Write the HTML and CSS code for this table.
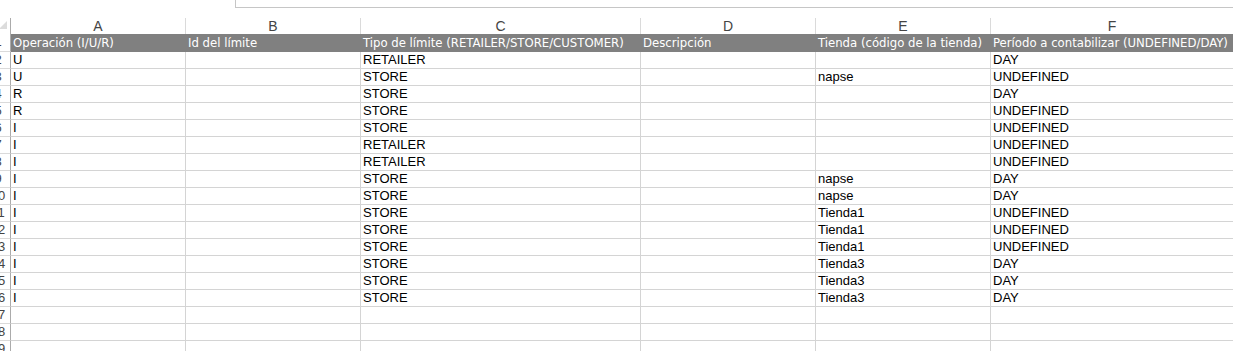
FILE: index.html
```html
<!DOCTYPE html>
<html lang="es">
<head>
<meta charset="utf-8">
<title>Límites</title>
<link rel="stylesheet" href="styles.css">
</head>
<body>
<div class="topbar"><div class="formula"></div></div>
<div class="sheet">
  <div class="corner"><svg width="8" height="8" viewBox="0 0 8 8"><polygon points="8,0 8,8 0,8" fill="#dcdcdc"/></svg></div>
  <div class="col">A</div><div class="col">B</div><div class="col">C</div><div class="col">D</div><div class="col">E</div><div class="col last">F</div>

  <div class="rh">1</div>
  <div class="hd">Operación (I/U/R)</div><div class="hd">Id del límite</div><div class="hd">Tipo de límite (RETAILER/STORE/CUSTOMER)</div><div class="hd">Descripción</div><div class="hd">Tienda (código de la tienda)</div><div class="hd last">Período a contabilizar (UNDEFINED/DAY)</div>

  <div class="rh">2</div><div class="c">U</div><div class="c"></div><div class="c">RETAILER</div><div class="c"></div><div class="c"></div><div class="c last">DAY</div>
  <div class="rh">3</div><div class="c">U</div><div class="c"></div><div class="c">STORE</div><div class="c"></div><div class="c">napse</div><div class="c last">UNDEFINED</div>
  <div class="rh">4</div><div class="c">R</div><div class="c"></div><div class="c">STORE</div><div class="c"></div><div class="c"></div><div class="c last">DAY</div>
  <div class="rh">5</div><div class="c">R</div><div class="c"></div><div class="c">STORE</div><div class="c"></div><div class="c"></div><div class="c last">UNDEFINED</div>
  <div class="rh">6</div><div class="c">I</div><div class="c"></div><div class="c">STORE</div><div class="c"></div><div class="c"></div><div class="c last">UNDEFINED</div>
  <div class="rh">7</div><div class="c">I</div><div class="c"></div><div class="c">RETAILER</div><div class="c"></div><div class="c"></div><div class="c last">UNDEFINED</div>
  <div class="rh">8</div><div class="c">I</div><div class="c"></div><div class="c">RETAILER</div><div class="c"></div><div class="c"></div><div class="c last">UNDEFINED</div>
  <div class="rh">9</div><div class="c">I</div><div class="c"></div><div class="c">STORE</div><div class="c"></div><div class="c">napse</div><div class="c last">DAY</div>
  <div class="rh">10</div><div class="c">I</div><div class="c"></div><div class="c">STORE</div><div class="c"></div><div class="c">napse</div><div class="c last">DAY</div>
  <div class="rh">11</div><div class="c">I</div><div class="c"></div><div class="c">STORE</div><div class="c"></div><div class="c">Tienda1</div><div class="c last">UNDEFINED</div>
  <div class="rh">12</div><div class="c">I</div><div class="c"></div><div class="c">STORE</div><div class="c"></div><div class="c">Tienda1</div><div class="c last">UNDEFINED</div>
  <div class="rh">13</div><div class="c">I</div><div class="c"></div><div class="c">STORE</div><div class="c"></div><div class="c">Tienda1</div><div class="c last">UNDEFINED</div>
  <div class="rh">14</div><div class="c">I</div><div class="c"></div><div class="c">STORE</div><div class="c"></div><div class="c">Tienda3</div><div class="c last">DAY</div>
  <div class="rh">15</div><div class="c">I</div><div class="c"></div><div class="c">STORE</div><div class="c"></div><div class="c">Tienda3</div><div class="c last">DAY</div>
  <div class="rh">16</div><div class="c">I</div><div class="c"></div><div class="c">STORE</div><div class="c"></div><div class="c">Tienda3</div><div class="c last">DAY</div>
  <div class="rh">17</div><div class="c"></div><div class="c"></div><div class="c"></div><div class="c"></div><div class="c"></div><div class="c last"></div>
  <div class="rh">18</div><div class="c"></div><div class="c"></div><div class="c"></div><div class="c"></div><div class="c"></div><div class="c last"></div>
  <div class="rh">19</div><div class="c"></div><div class="c"></div><div class="c"></div><div class="c"></div><div class="c"></div><div class="c last"></div>
</div>
</body>
</html>
```
FILE: styles.css
```css
html, body {
  margin: 0;
  padding: 0;
  background: #fff;
  overflow: hidden;
}
body {
  width: 1233px;
  height: 351px;
  font-family: "Liberation Sans", Arial, sans-serif;
}
.topbar {
  height: 18px;
}
.formula {
  margin-left: 235px;
  height: 7px;
  border-left: 1px solid #c6c6c6;
  border-bottom: 1px solid #c6c6c6;
}
.sheet {
  margin-left: -14px;
  display: grid;
  grid-template-columns: 25px 175px 175px 280px 175px 175px 1fr;
  grid-template-rows: 16px 18px;
  grid-auto-rows: 17px;
}
.corner {
  border-right: 1px solid #ababab;
  display: flex;
  justify-content: flex-end;
  align-items: flex-end;
  padding: 0 3px 5px 0;
}
.col {
  border-right: 1px solid #dadada;
  text-align: center;
  font-size: 14px;
  line-height: 16px;
  color: #444;
}
.rh {
  border-right: 1px solid #ababab;
  border-bottom: 1px solid #dadada;
  text-align: center;
  font-size: 13px;
  line-height: 16px;
  color: #444;
  overflow: hidden;
}
.hd {
  background: #808080;
  border-bottom: 1px solid #808080;
  color: #fff;
  font-family: "DejaVu Sans Condensed", "DejaVu Sans", sans-serif;
  font-size: 13px;
  line-height: 17px;
  padding-left: 2px;
  white-space: nowrap;
  overflow: hidden;
}
.c {
  border-right: 1px solid #d4d4d4;
  border-bottom: 1px solid #d4d4d4;
  font-size: 13px;
  line-height: 16px;
  padding-left: 2px;
  color: #000;
  white-space: nowrap;
}
.last {
  border-right: none;
}
```
